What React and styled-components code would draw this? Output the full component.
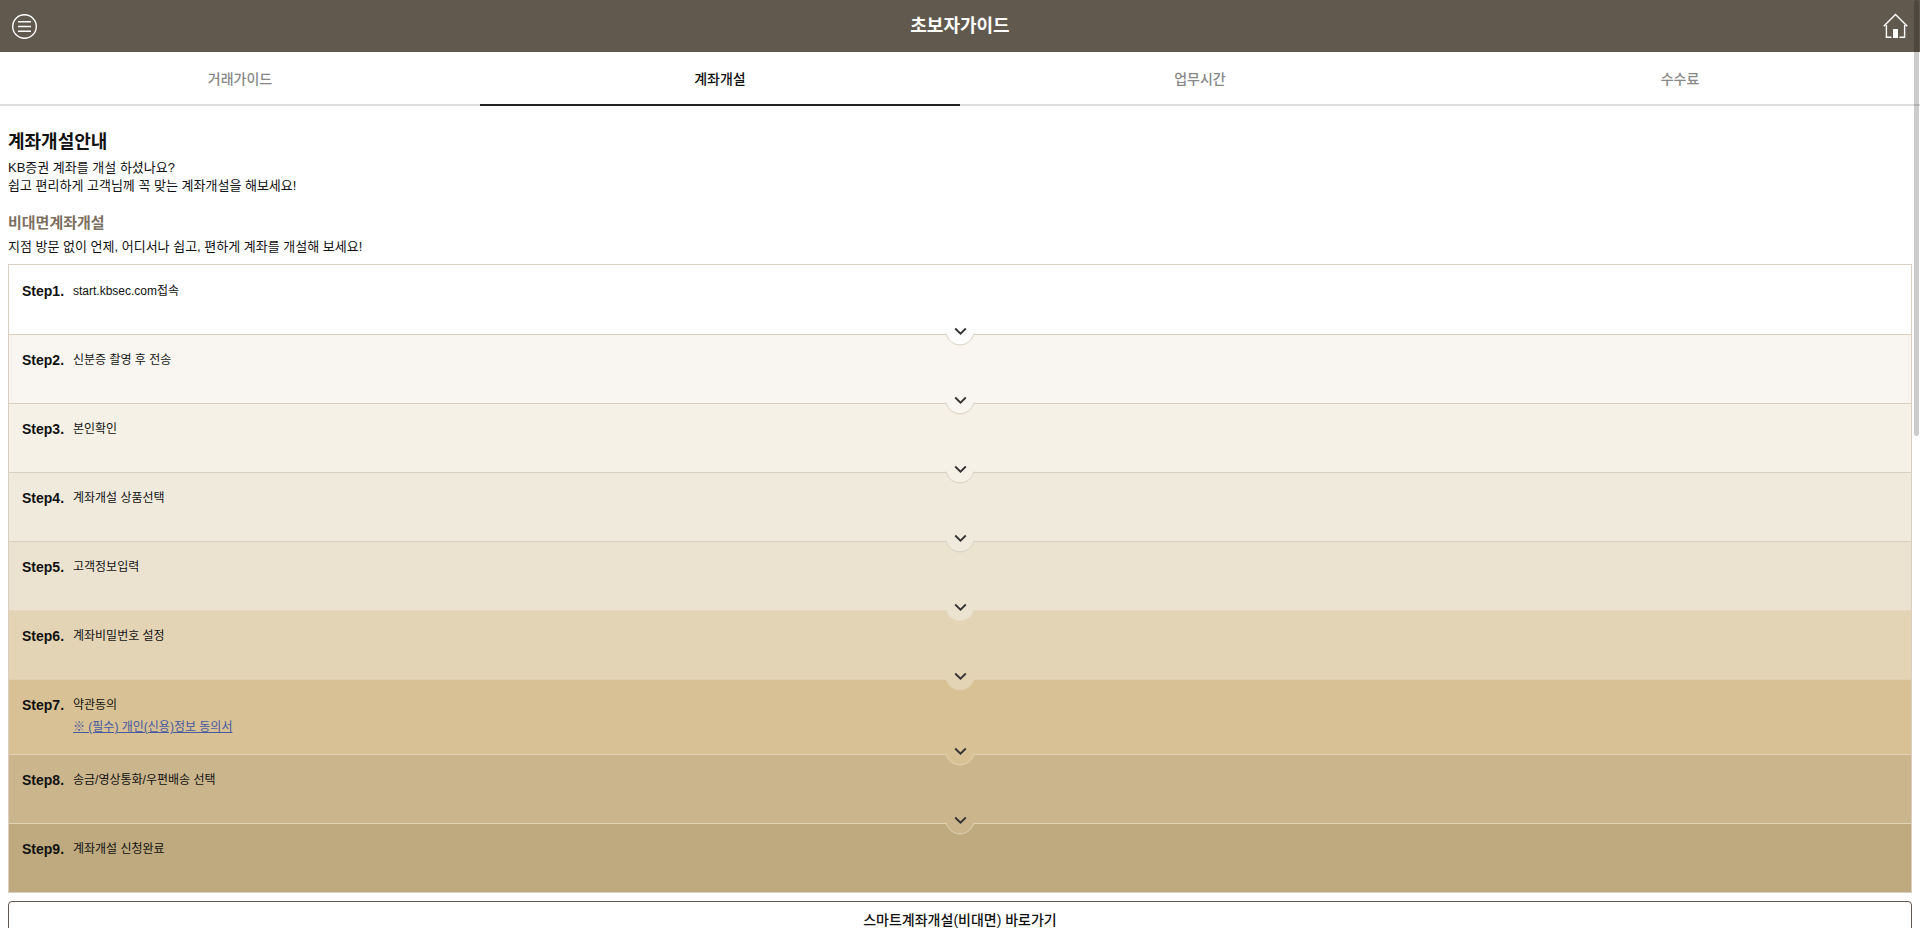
import React from 'react';
import styled, { createGlobalStyle } from 'styled-components';

const GlobalStyle = createGlobalStyle`
  * {
    box-sizing: border-box;
  }
  body {
    margin: 0;
    overflow: hidden;
    background: #fff;
    color: #111;
    font-family: "Liberation Sans", "Noto Sans CJK KR", sans-serif;
  }
  h1, h2, h3, p, ol {
    margin: 0;
    padding: 0;
  }
`;

const Header = styled.header`
  display: flex;
  align-items: center;
  justify-content: space-between;
  height: 52px;
  padding: 0 12px;
  background: #61594e;
  color: #fff;
  h1 {
    font-size: 18px;
    line-height: 24px;
  }
`;

const IconButton = styled.button`
  display: flex;
  padding: 0;
  border: 0;
  background: none;
  color: #fff;
  cursor: pointer;
`;

const Tabs = styled.nav`
  display: flex;
`;

const Tab = styled.a`
  flex: 1;
  height: 54px;
  border-bottom: 2px solid ${p => (p.$active ? '#222' : '#ddd')};
  color: ${p => (p.$active ? '#111' : '#888')};
  font-size: 14px;
  font-weight: 500;
  line-height: 54px;
  text-align: center;
  text-decoration: none;
`;

const Content = styled.main`
  padding: 24px 8px 0;
`;

const Title = styled.h2`
  font-size: 18px;
  line-height: 25px;
`;

const SubTitle = styled.h3`
  margin-top: 16px;
  color: #7c6f60;
  font-size: 15px;
  line-height: 23px;
`;

const Text = styled.p`
  padding-top: 4px;
  font-size: 13px;
  line-height: 18px;
`;

const Steps = styled.ol`
  && {
    margin-top: 8px;
    padding-top: 1px;
  }
  border: 1px solid #d8cfc0;
  border-bottom: 0;
  list-style: none;
`;

const Step = styled.li`
  position: relative;
  display: flex;
  min-height: 69px;
  padding: 15px 13px 17px;
  border-bottom: 1px solid ${p => p.$line};
  background: ${p => p.$bg};
  line-height: 20px;
`;

const StepName = styled.strong`
  width: 51px;
  font-size: 14px;
`;

const StepBody = styled.div`
  font-size: 12px;
`;

const StepLink = styled.a`
  display: block;
  padding-top: 2px;
  color: #465aa0;
`;

const Notch = styled.svg`
  position: absolute;
  z-index: 1;
  left: 50%;
  bottom: -12px;
  margin-left: -15px;
`;

const LinkButton = styled.button`
  display: block;
  width: 100%;
  height: 35px;
  margin-top: 8px;
  border: 1px solid #60584c;
  border-radius: 4px;
  background: #fff;
  color: #111;
  font-family: inherit;
  font-size: 14px;
  font-weight: 500;
`;

const ScrollThumb = styled.div`
  position: fixed;
  z-index: 2;
  top: 0;
  right: 1px;
  width: 5px;
  height: 47vh;
  border-radius: 3px;
  background: rgba(0, 0, 0, 0.2);
`;

const tabs = ['거래가이드', '계좌개설', '업무시간', '수수료'];

const steps = [
  { text: 'start.kbsec.com접속', bg: '#fff', line: '#d8cfc0' },
  { text: '신분증 촬영 후 전송', bg: '#f9f6f1', line: '#d8cfc0' },
  { text: '본인확인', bg: '#f6f1e6', line: '#d8cfc0' },
  { text: '계좌개설 상품선택', bg: '#f0eadd', line: '#d8cfc0' },
  { text: '고객정보입력', bg: '#ebe3d0', line: '#e4d8bf' },
  { text: '계좌비밀번호 설정', bg: '#e4d4b6', line: '#e0d0b0' },
  { text: '약관동의', link: '※ (필수) 개인(신용)정보 동의서', bg: '#d8c194', line: '#e2d3b7' },
  { text: '송금/영상통화/우편배송 선택', bg: '#cab58c', line: '#e2d3b7' },
  { text: '계좌개설 신청완료', bg: '#beaa7e', line: '#d8cfc0' },
];

const MenuIcon = () => (
  <svg width="25" height="26" viewBox="0 0 25 26" fill="none" stroke="currentColor">
    <circle cx="12.5" cy="13.5" r="11.8" strokeWidth="1.4" />
    <path d="M6 8.7h13M6 13.5h13M6 18.3h13" strokeWidth="1.4" />
  </svg>
);

const HomeIcon = () => (
  <svg width="25" height="26" viewBox="0 0 25 26" fill="none" stroke="currentColor" strokeWidth="1.4">
    <path d="M.7 13.2 12.5 1.6l11.8 11.6M3.4 12v12.3h5.1M21.6 12v12.3h-5.1" />
    <path d="M10 16h5v9h-5z" fill="currentColor" stroke="none" />
  </svg>
);

const StepNotch = ({ bg, line }) => (
  <Notch width="30" height="24" viewBox="0 0 30 24" fill="none">
    <path d="M.7 12 Q4 22.9 15 22.9 Q26 22.9 29.3 12z" fill={bg} />
    <path d="M.9 11.5C3 18.6 8.5 22.9 15 22.9S27 18.6 29.1 11.5" stroke={line} />
    <path d="m10.2 6.5 5.3 5.2 5.3-5.2" stroke="#333" strokeWidth="1.8" />
  </Notch>
);

const App = () => (
  <>
    <GlobalStyle />
    <Header>
      <IconButton aria-label="메뉴"><MenuIcon /></IconButton>
      <h1>초보자가이드</h1>
      <IconButton aria-label="홈"><HomeIcon /></IconButton>
    </Header>
    <Tabs>
      {tabs.map(tab => (
        <Tab key={tab} href="#" $active={tab === '계좌개설'}>{tab}</Tab>
      ))}
    </Tabs>
    <Content>
      <Title>계좌개설안내</Title>
      <Text>
        KB증권 계좌를 개설 하셨나요?<br />
        쉽고 편리하게 고객님께 꼭 맞는 계좌개설을 해보세요!
      </Text>
      <SubTitle>비대면계좌개설</SubTitle>
      <Text>지점 방문 없이 언제, 어디서나 쉽고, 편하게 계좌를 개설해 보세요!</Text>
      <Steps>
        {steps.map((step, i) => (
          <Step key={step.text} $bg={step.bg} $line={step.line}>
            <StepName>Step{i + 1}.</StepName>
            <StepBody>
              {step.text}
              {step.link && <StepLink href="#">{step.link}</StepLink>}
            </StepBody>
            {i < steps.length - 1 && <StepNotch bg={step.bg} line={step.line} />}
          </Step>
        ))}
      </Steps>
      <LinkButton>스마트계좌개설(비대면) 바로가기</LinkButton>
    </Content>
    <ScrollThumb />
  </>
);

export default App;
